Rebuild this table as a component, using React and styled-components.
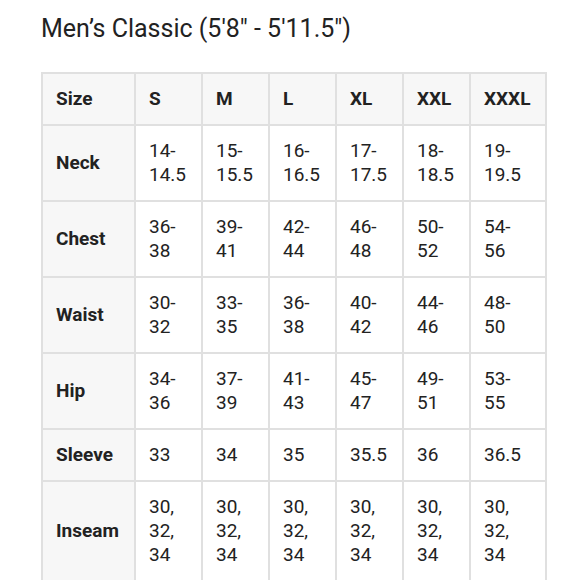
import styled, { createGlobalStyle } from 'styled-components';

const GlobalStyle = createGlobalStyle`
  body {
    margin: 0;
    background: #ffffff;
    font-family: Roboto, "Liberation Sans", sans-serif;
    color: #222222;
  }
`;

const sizes = ['S', 'M', 'L', 'XL', 'XXL', 'XXXL'];

const rows = [
  { label: 'Neck', values: ['14-14.5', '15-15.5', '16-16.5', '17-17.5', '18-18.5', '19-19.5'] },
  { label: 'Chest', values: ['36-38', '39-41', '42-44', '46-48', '50-52', '54-56'] },
  { label: 'Waist', values: ['30-32', '33-35', '36-38', '40-42', '44-46', '48-50'] },
  { label: 'Hip', values: ['34-36', '37-39', '41-43', '45-47', '49-51', '53-55'] },
  { label: 'Sleeve', values: ['33', '34', '35', '35.5', '36', '36.5'] },
  { label: 'Inseam', values: Array(6).fill('30, 32, 34') },
];

const App = () => {
  return (
    <Page>
      <GlobalStyle />
      <Title>Men’s Classic (5'8" - 5'11.5")</Title>
      <Table>
        <colgroup>
          <col style={{ width: 93 }} />
          {sizes.map((s, i) => (
            <col key={s} style={{ width: i === sizes.length - 1 ? 76 : 67 }} />
          ))}
        </colgroup>
        <thead>
          <tr>
            <HeadCell>Size</HeadCell>
            {sizes.map((s) => (
              <HeadCell key={s}>{s}</HeadCell>
            ))}
          </tr>
        </thead>
        <tbody>
          {rows.map((row) => (
            <tr key={row.label}>
              <HeadCell>{row.label}</HeadCell>
              {row.values.map((v, i) => (
                <Cell key={i}>{v}</Cell>
              ))}
            </tr>
          ))}
        </tbody>
      </Table>
    </Page>
  );
};

const Page = styled.div`
  padding: 13px 0 0 41px;
`;

const Title = styled.h1`
  margin: 0 0 27px;
  font-size: 25px;
  line-height: 32px;
  font-weight: 400;
  color: #222222;
`;

const Table = styled.table`
  border-collapse: collapse;
  table-layout: fixed;
  width: 504px;
`;

const Cell = styled.td`
  border: 2px solid #e0e0e0;
  padding: 13px 24px 13px 13px;
  font-size: 19px;
  line-height: 24px;
  text-align: left;
  vertical-align: middle;
  color: #222222;
  overflow: visible;
`;

const HeadCell = styled(Cell).attrs({ as: 'th' })`
  background: #f7f7f7;
  font-weight: 700;
  white-space: nowrap;
`;

export default App;
